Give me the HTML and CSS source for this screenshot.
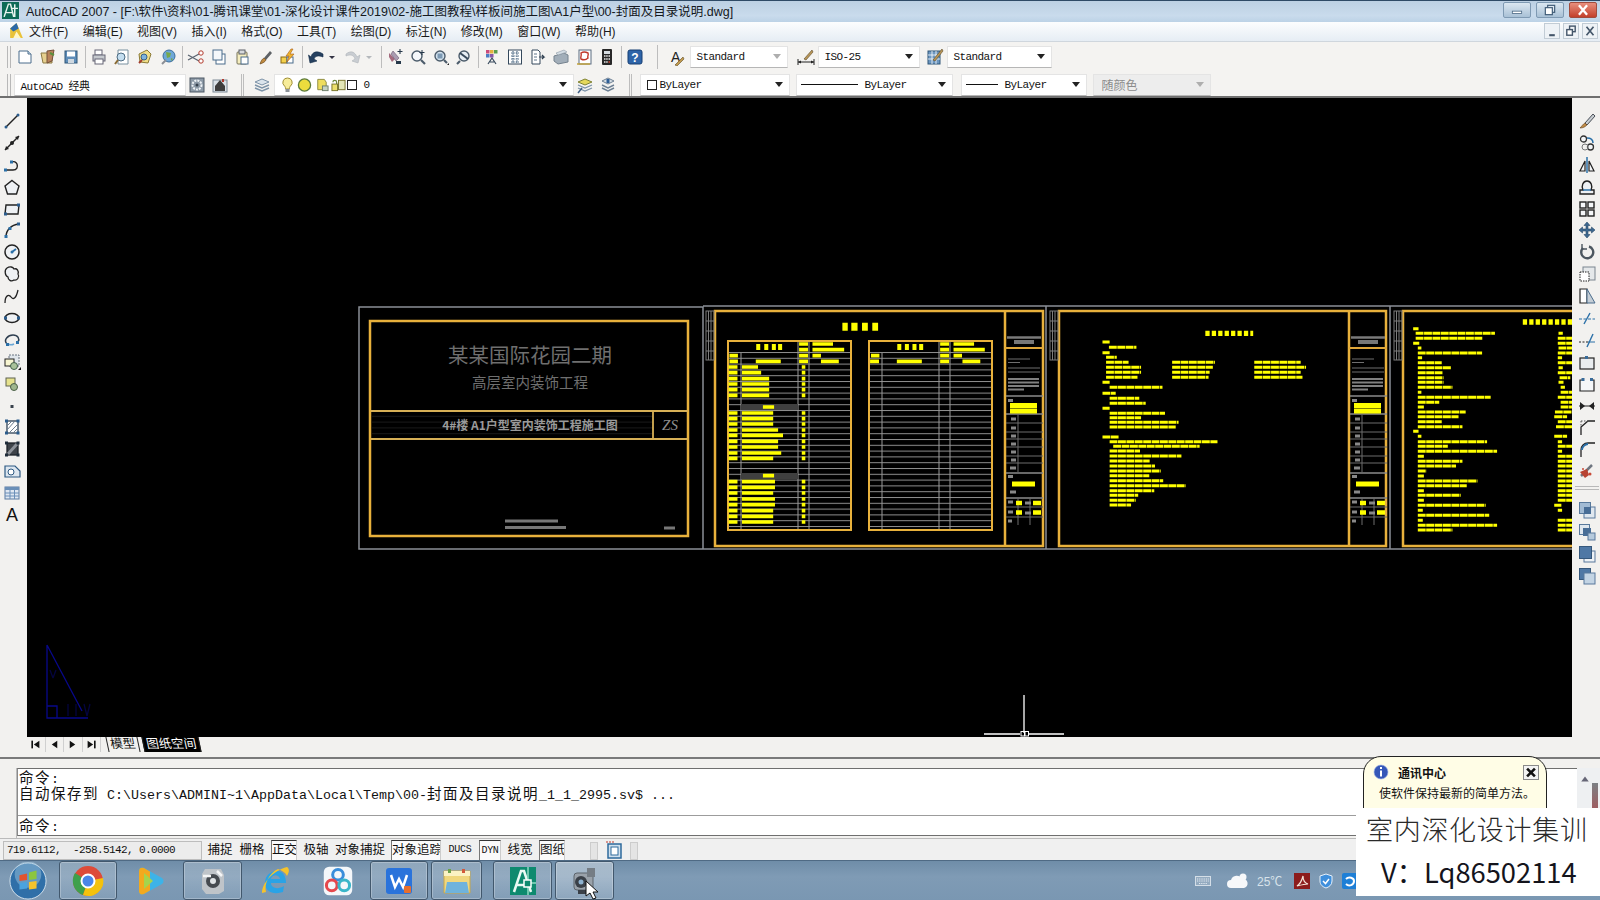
FILE: index.html
```html
<!DOCTYPE html>
<html lang="zh">
<head>
<meta charset="utf-8">
<title>AutoCAD 2007</title>
<link rel="stylesheet" href="styles.css">
</head>
<body>
<div class="app">
  <header class="titlebar">
    <svg class="applogo" viewBox="0 0 16 16"><rect width="16" height="16" fill="#0d6b57"/><path d="M2 14 6 2h2l3 12M4 10h6M12 2v12M9 6h6" stroke="#e8f5ef" stroke-width="1.4" fill="none"/></svg>
    <span class="titletext">AutoCAD 2007 - [F:\软件\资料\01-腾讯课堂\01-深化设计课件2019\02-施工图教程\样板间施工图\A1户型\00-封面及目录说明.dwg]</span>
    <div class="winbtns">
      <span class="winbtn"><svg viewBox="0 0 12 10"><rect x="2" y="6" width="8" height="2" fill="#fff" stroke="#4d6a86" stroke-width=".7"/></svg></span>
      <span class="winbtn"><svg viewBox="0 0 12 10"><rect x="4" y="1" width="6" height="6" fill="#dfe8f0" stroke="#3f5b76"/><rect x="2" y="3" width="6" height="6" fill="#fff" stroke="#3f5b76"/></svg></span>
      <span class="winbtn close"><svg viewBox="0 0 12 10"><path d="M2.5 1 9.5 9M9.5 1 2.5 9" stroke="#fff" stroke-width="2"/></svg></span>
    </div>
  </header>

  <nav class="menubar">
    <svg class="menulogo" viewBox="0 0 16 16"><path d="M2 15V6l6-5 6 14z" fill="#e9c23a"/><path d="M2 6l6-5 2 5-5 3z" fill="#2c6aa8"/><path d="M5 15l3-6 4 6z" fill="#fff6c8"/></svg>
    <span class="menuitem">文件(F)</span><span class="menuitem">编辑(E)</span><span class="menuitem">视图(V)</span><span class="menuitem">插入(I)</span><span class="menuitem">格式(O)</span><span class="menuitem">工具(T)</span><span class="menuitem">绘图(D)</span><span class="menuitem">标注(N)</span><span class="menuitem">修改(M)</span><span class="menuitem">窗口(W)</span><span class="menuitem">帮助(H)</span>
    <div class="docbtns">
      <span class="docbtn"><svg viewBox="0 0 10 10"><path d="M3 8h4" stroke="#44566a" stroke-width="1.5"/></svg></span>
      <span class="docbtn"><svg viewBox="0 0 10 10"><rect x="4" y="1.5" width="4" height="4" fill="none" stroke="#44566a"/><rect x="2" y="4" width="4" height="4" fill="#fff" stroke="#44566a"/></svg></span>
      <span class="docbtn"><svg viewBox="0 0 10 10"><path d="M2.5 2 7.5 8M7.5 2 2.5 8" stroke="#44566a" stroke-width="1.2"/></svg></span>
    </div>
  </nav>

  <div class="toolrow first">
    <span class="grip"></span>
    <span class="ic"><svg viewBox="0 0 18 18"><path d="M3 3h9l3 3v9H3z" fill="#fff" stroke="#4a6c8c"/><path d="M12 3v3h3" fill="#cfe0ee" stroke="#4a6c8c"/></svg></span>
    <span class="ic"><svg viewBox="0 0 18 18"><path d="M2 5h8l3 2v8H4z" fill="#e6cf8e" stroke="#8c7a45"/><path d="M8 3l7-1-2 11-5 2z" fill="#b9825a" stroke="#74503a"/><path d="M11 5l4 2" stroke="#5b8f3c" stroke-width="2"/></svg></span>
    <span class="ic"><svg viewBox="0 0 18 18"><rect x="3" y="3" width="12" height="12" fill="#5f8db8" stroke="#2f5679"/><rect x="5" y="3.5" width="8" height="5" fill="#fff"/><rect x="6" y="11" width="6" height="4" fill="#cfd8e0"/></svg></span>
    <span class="sep"></span>
    <span class="ic"><svg viewBox="0 0 18 18"><rect x="5" y="2" width="7" height="5" fill="#fff" stroke="#667"/><rect x="3" y="7" width="12" height="6" fill="#c5c9ce" stroke="#667"/><rect x="5" y="11" width="8" height="5" fill="#fff" stroke="#667"/></svg></span>
    <span class="ic"><svg viewBox="0 0 18 18"><path d="M5 2h10v14H5z" fill="#fff" stroke="#78909f"/><circle cx="8" cy="9" r="4" fill="#c4def0" stroke="#4c6b82"/><path d="M5 12 2 16" stroke="#8a6b34" stroke-width="2"/></svg></span>
    <span class="ic"><svg viewBox="0 0 18 18"><path d="M3 6l8-4 4 4-3 9-8-1z" fill="#f0dd86" stroke="#8b7a36"/><circle cx="8" cy="9" r="3" fill="#7eb2dc" stroke="#355f88"/><path d="M3 15l3-3" stroke="#a13b2d" stroke-width="2"/></svg></span>
    <span class="ic"><svg viewBox="0 0 18 18"><circle cx="10" cy="8" r="6" fill="#6ea8d8" stroke="#3d6e9c"/><path d="M7 4l5 1-1 4-3 1zM12 10l2 1-2 2z" fill="#77a84d"/><path d="M3 16l4-4" stroke="#8a8f96" stroke-width="2"/></svg></span>
    <span class="sep"></span>
    <span class="ic"><svg viewBox="0 0 18 18"><path d="M1 7l11 6M1 12l11-6" stroke="#5a6470" stroke-width="1.3"/><circle cx="14" cy="5" r="2.2" fill="#fff" stroke="#b2392b"/><circle cx="14" cy="13" r="2.2" fill="#fff" stroke="#b2392b"/></svg></span>
    <span class="ic"><svg viewBox="0 0 18 18"><rect x="6" y="6" width="9" height="10" fill="#fff" stroke="#4a6c8c"/><rect x="3" y="2" width="9" height="10" fill="#f4f7fa" stroke="#4a6c8c"/></svg></span>
    <span class="ic"><svg viewBox="0 0 18 18"><rect x="4" y="4" width="10" height="12" rx="1" fill="#f6eebf" stroke="#76725a"/><rect x="6" y="2" width="6" height="4" fill="#d7d9dc" stroke="#5a5f66"/><rect x="8" y="9" width="7" height="7" fill="#fff" stroke="#4a6c8c"/></svg></span>
    <span class="ic"><svg viewBox="0 0 18 18"><path d="M14 3 8 10l2 2 6-7z" fill="#5d6165"/><path d="M8 10c-2 1-3 3-4 6 3-1 5-2 6-4z" fill="#c08a3e" stroke="#5a3a12" stroke-width=".6"/></svg></span>
    <span class="ic"><svg viewBox="0 0 18 18"><rect x="2" y="9" width="6" height="6" fill="#f4d14c" stroke="#8c6a12"/><rect x="8" y="9" width="6" height="6" fill="#fff" stroke="#4a6c8c"/><path d="M12 1 7 8h3l-2 6 7-8h-4l3-5z" fill="#efb52f" stroke="#a75b18" stroke-width=".6"/></svg></span>
    <span class="sep"></span>
    <span class="ic"><svg viewBox="0 0 18 18"><path d="M16 6C10 2 5 4 4 9L1.500 7 3 15l7-2-3-2c1-3 4-4 9-2z" fill="#26405f" stroke="#102a47" stroke-width=".6"/></svg></span>
    <span class="arrowslot"><svg viewBox="0 0 8 8"><path d="M1 3h6L4 6z" fill="#334"/></svg></span>
    <span class="ic"><svg viewBox="0 0 18 18"><path d="M2 6c5-4 9-2 11 3l3-2-2 8-6-2 3-2C10 7 6 6 2 8z" fill="#c9cdd2" stroke="#aeb3b8" stroke-width=".6"/></svg></span>
    <span class="arrowslot"><svg viewBox="0 0 8 8"><path d="M1 3h6L4 6z" fill="#b4b8bc"/></svg></span>
    <span class="sep"></span>
    <span class="ic"><svg viewBox="0 0 18 18"><path d="M3 5l6 6-3 3-3-5z" fill="#a56b7e"/><path d="M7 3l6 7-3 3-5-7z" fill="#a99cb1" stroke="#6c5b70" stroke-width=".6"/><rect x="10" y="13" width="5" height="3" fill="#26384a"/><path d="M14 1v5M11.500 3.500h5" stroke="#26384a" stroke-width="1.100"/></svg></span>
    <span class="ic"><svg viewBox="0 0 18 18"><circle cx="8" cy="8" r="5" fill="#f5f8fb" stroke="#4c5c6b" stroke-width="1.400"/><path d="M12 12l4 4" stroke="#4c5c6b" stroke-width="2.200"/><path d="M13 2v5M10.500 4.500h5" stroke="#26384a"/></svg></span>
    <span class="ic"><svg viewBox="0 0 18 18"><circle cx="8" cy="8" r="5" fill="#d3e2ee" stroke="#4c5c6b" stroke-width="1.400"/><rect x="5.500" y="5.500" width="5" height="5" fill="#7c99b3"/><path d="M12 12l3 3" stroke="#4c5c6b" stroke-width="2.200"/><path d="M15 17h2v-2z" fill="#222"/></svg></span>
    <span class="ic"><svg viewBox="0 0 18 18"><circle cx="9" cy="8" r="5" fill="#e7eef4" stroke="#4c5c6b" stroke-width="1.400"/><path d="M5 5l8 6" stroke="#384a5c" stroke-width="2"/><path d="M5 13l-3 3" stroke="#4c5c6b" stroke-width="2.200"/></svg></span>
    <span class="sep"></span>
    <span class="ic"><svg viewBox="0 0 18 18"><rect x="3" y="2" width="3.500" height="3.500" fill="#c94a7b"/><rect x="7" y="2" width="3.500" height="3.500" fill="#e5b13f"/><rect x="11" y="2" width="3.500" height="3.500" fill="#5a9d4c"/><rect x="3" y="6" width="3.500" height="3.500" fill="#4a7cc4"/><rect x="7" y="6" width="3.500" height="3.500" fill="#8856a8"/><path d="M5 16l4-6 4 6M7 14h4" stroke="#36495c" stroke-width="1.200" fill="none"/></svg></span>
    <span class="ic"><svg viewBox="0 0 18 18"><rect x="2.500" y="2" width="13" height="14" fill="#fff" stroke="#35495c"/><path d="M5 5h8M5 8h8M5 11h8M5 14h8M7 3v12M11 3v12" stroke="#55708a" stroke-width="1.200" stroke-dasharray="1.500 .8"/></svg></span>
    <span class="ic"><svg viewBox="0 0 18 18"><path d="M3 2h6l2 2v12H3z" fill="#fff" stroke="#35495c"/><path d="M5 6h3M5 9h3M5 12h3" stroke="#5f7489"/><path d="M10 9h5l-2-2m2 2-2 2" stroke="#2e3f50" fill="none" stroke-width="1.200"/></svg></span>
    <span class="ic"><svg viewBox="0 0 18 18"><path d="M2 8l10-3 4 2v7l-10 2-4-3z" fill="#a2aeb9" stroke="#75828e"/><path d="M4 5l8-3 3 2-9 3z" fill="#d4dde4" stroke="#8f9ba6" stroke-width=".6"/></svg></span>
    <span class="ic"><svg viewBox="0 0 18 18"><rect x="4" y="2" width="12" height="14" fill="#fff" stroke="#5b6d80"/><path d="M6 5c3-2 5-1 7 0 1 2-1 3 0 5-2 2-5 2-7 1-1-2 1-3 0-6z" fill="none" stroke="#c0392b" stroke-width="1.400"/><path d="M2 16h13" stroke="#c2a23d" stroke-width="1.500"/></svg></span>
    <span class="ic"><svg viewBox="0 0 18 18"><rect x="4" y="1" width="10" height="16" rx="1" fill="#282828"/><rect x="6" y="3" width="6" height="3" fill="#d7dde2"/><path d="M6 8h1.500M8.200 8h1.500M10.500 8H12M6 11h1.500M8.200 11h1.500M10.500 11H12M6 14h1.500M8.200 14h1.500" stroke="#e9e9e9" stroke-width="1.500"/><path d="M10.500 14H12" stroke="#d34836" stroke-width="1.500"/></svg></span>
    <span class="sep"></span>
    <span class="ic"><svg viewBox="0 0 18 18"><rect x="2" y="2" width="14" height="14" rx="2" fill="#2e64a8" stroke="#163e73"/><text x="9" y="14" class="helpq">?</text></svg></span>
    <span class="endsep"></span>
    <span class="ic"><svg viewBox="0 0 18 18"><text x="2" y="14" class="glyph-a">A</text><path d="M6 17l8-8 1 2-7 7z" fill="#c29a4e" stroke="#5c4a22" stroke-width=".6"/></svg></span>
    <span class="combo w98 disabledarrow"><span class="mono">Standard</span><span class="caret"></span></span>
    <span class="ic"><svg viewBox="0 0 18 18"><path d="M1 14h16" stroke="#222"/><path d="M1 11v6M17 11v6" stroke="#222"/><path d="M1 14l3-1.500v3zM17 14l-3-1.500v3z" fill="#222"/><path d="M15 2 7 11l2 1 7-8z" fill="#b99657" stroke="#5a4826" stroke-width=".6"/></svg></span>
    <span class="combo w102"><span class="mono">ISO-25</span><span class="caret"></span></span>
    <span class="ic"><svg viewBox="0 0 18 18"><rect x="2" y="3" width="12" height="13" fill="#6d97c1" stroke="#2f5679"/><path d="M2 7h12M2 11h12M6 3v13M10 3v13" stroke="#fff" stroke-width=".8"/><path d="M16 1 7 12l2 1 8-10z" fill="#b99657" stroke="#5a4826" stroke-width=".6"/></svg></span>
    <span class="combo w105"><span class="mono">Standard</span><span class="caret"></span></span>
  </div>

  <div class="toolrow second">
    <span class="grip"></span>
    <span class="combo w172"><span class="mono">AutoCAD 经典</span><span class="caret"></span></span>
    <span class="ic"><svg viewBox="0 0 18 18"><rect x="2" y="2" width="14" height="14" fill="#8c99a6" stroke="#4c5964"/><circle cx="9" cy="9" r="4.500" fill="none" stroke="#eef2f5" stroke-width="2" stroke-dasharray="2 1"/><circle cx="9" cy="9" r="1.500" fill="#36424e"/></svg></span>
    <span class="ic"><svg viewBox="0 0 18 18"><rect x="2" y="4" width="14" height="12" fill="#dbe2e8" stroke="#7d8a96"/><path d="M4 10l5-6 5 6v5H4z" fill="#3d3d3d"/><path d="M12 3v3" stroke="#b03a2e" stroke-width="2"/></svg></span>
    <span class="gapsep"></span>
    <span class="ic"><svg viewBox="0 0 18 18"><path d="M9 3l7 3-7 3-7-3z" fill="#dbe4ec" stroke="#7d93a8"/><path d="M2 9l7 3 7-3M2 12l7 3 7-3" fill="none" stroke="#7d93a8" stroke-width="1.400"/></svg></span>
    <span class="combo w300 layer">
      <span class="lic"><svg viewBox="0 0 14 16"><path d="M7 1a4.500 4.500 0 0 0-3 8c1 1 1 2 1 3h4c0-1 0-2 1-3a4.500 4.500 0 0 0-3-8z" fill="#f7ec9a" stroke="#a08f36"/><rect x="5" y="12" width="4" height="3" fill="#8c9299"/></svg></span>
      <span class="lic"><svg viewBox="0 0 16 16"><circle cx="8" cy="8" r="6.500" fill="#ecdc3d" stroke="#5c7b3a" stroke-width="1.400"/></svg></span>
      <span class="lic"><svg viewBox="0 0 16 16"><path d="M4 2h7l2 3v8H4z" fill="#eedd5e" stroke="#8b8a3e"/><rect x="9" y="9" width="6" height="5" fill="#c4d2c2" stroke="#6c7d6b"/></svg></span>
      <span class="lic"><svg viewBox="0 0 16 16"><path d="M2 5a2 2 0 0 1 4 0v2" fill="none" stroke="#6f8a3e" stroke-width="1.300"/><rect x="1" y="7" width="6" height="7" fill="#ecdf6b" stroke="#77732a"/><rect x="8" y="3" width="7" height="10" fill="#e4e7b8" stroke="#77732a"/></svg></span>
      <span class="swatch"></span>
      <span class="layerzero mono">0</span>
      <span class="caret"></span>
    </span>
    <span class="ic"><svg viewBox="0 0 18 18"><path d="M9 3l7 3-7 3-7-3z" fill="#e5d85b" stroke="#7f8232"/><path d="M2 9l7 3 7-3M2 12l7 3 7-3" fill="none" stroke="#7d93a8" stroke-width="1.300"/><path d="M2 17l4-5" stroke="#3d5e86" stroke-width="1.500"/></svg></span>
    <span class="ic"><svg viewBox="0 0 18 18"><path d="M9 2l6 3-6 3-6-3z" fill="#d5dde4" stroke="#6e8194"/><path d="M3 9l6 3 6-3M3 12l6 3 6-3" fill="none" stroke="#6e8194" stroke-width="1.400"/><path d="M9 3v4" stroke="#2f5f96" stroke-width="3"/></svg></span>
    <span class="gapsep small"></span>
    <span class="combo w150"><span class="swatch"></span><span class="mono bylayer">ByLayer</span><span class="caret"></span></span>
    <span class="combo w157 spaced"><span class="linesample long"></span><span class="mono bylayer">ByLayer</span><span class="caret"></span></span>
    <span class="combo w126 spaced"><span class="linesample"></span><span class="mono bylayer">ByLayer</span><span class="caret"></span></span>
    <span class="combo w118 disabled"><span class="greytext">随颜色</span><span class="caret"></span></span>
  </div>

  <main class="workspace">
    <aside class="sidetb left">
      <span class="ti"><svg viewBox="0 0 18 18"><path d="M3 15 15 3" stroke="#222" stroke-width="1.500"/><circle cx="3" cy="15" r="1.500" fill="#2b5c8c"/><circle cx="15" cy="3" r="1.500" fill="#2b5c8c"/></svg></span>
      <span class="ti"><svg viewBox="0 0 18 18"><path d="M2 16 16 2" stroke="#222" stroke-width="1.500"/><circle cx="9" cy="9" r="2" fill="#222"/><path d="M2 16l4-1-3-3zM16 2l-4 1 3 3z" fill="#222"/></svg></span>
      <span class="ti"><svg viewBox="0 0 18 18"><path d="M2 14h8c4 0 5-3 4-6-1-2-3-3-5-2" fill="none" stroke="#222" stroke-width="1.400"/><rect x="1" y="12.500" width="3" height="3" fill="#2b70a8"/><rect x="7" y="4.500" width="3" height="3" fill="#2b70a8"/></svg></span>
      <span class="ti"><svg viewBox="0 0 18 18"><path d="M9 2.500 16 8l-2.500 8h-9L2 8z" fill="#eef1f4" stroke="#222" stroke-width="1.400"/></svg></span>
      <span class="ti"><svg viewBox="0 0 18 18"><path d="M3 5h13l-1 9H2z" fill="#eef1f4" stroke="#222" stroke-width="1.400"/><rect x="1" y="12.500" width="3" height="3" fill="#2b5c8c"/><rect x="14" y="3.500" width="3" height="3" fill="#2b5c8c"/></svg></span>
      <span class="ti"><svg viewBox="0 0 18 18"><path d="M3 16C3 9 8 4 16 3" fill="none" stroke="#222" stroke-width="1.500"/><rect x="1.500" y="14" width="3" height="3" fill="#2b70a8"/><rect x="14" y="1.500" width="3" height="3" fill="#2b5c8c"/><rect x="5.500" y="6" width="3" height="3" fill="#2b70a8"/></svg></span>
      <span class="ti"><svg viewBox="0 0 18 18"><circle cx="9" cy="9" r="7" fill="#eef1f4" stroke="#222" stroke-width="1.500"/><path d="M9 9l4-3" stroke="#2b70a8" stroke-width="1.800"/><circle cx="9" cy="9" r="1.500" fill="#2b70a8"/></svg></span>
      <span class="ti"><svg viewBox="0 0 18 18"><path d="M4 3c3-2 6-1 7 1 3-1 5 2 4 5 2 3-1 7-4 6-3 2-6 0-6-3C2 11 1 5 4 3z" fill="#eef1f4" stroke="#222" stroke-width="1.300"/></svg></span>
      <span class="ti"><svg viewBox="0 0 18 18"><path d="M2 16C2 8 6 7 8 10s5 2 7-7" fill="none" stroke="#222" stroke-width="1.300"/></svg></span>
      <span class="ti"><svg viewBox="0 0 18 18"><ellipse cx="9" cy="9" rx="7" ry="4.500" fill="#eef1f4" stroke="#222" stroke-width="1.600"/><rect x="1" y="7.500" width="3" height="3" fill="#2b5c8c"/><rect x="14" y="7.500" width="3" height="3" fill="#2b5c8c"/></svg></span>
      <span class="ti"><svg viewBox="0 0 18 18"><path d="M4 13C0 9 5 4 10 4s7 4 5 7" fill="none" stroke="#2f3f50" stroke-width="1.500"/><path d="M5 13c2 1 4 1 6 0" fill="none" stroke="#69a7d6" stroke-width="1.500"/><rect x="3" y="12" width="3" height="3" fill="#2b70a8"/><rect x="13" y="10" width="3" height="3" fill="#2b70a8"/></svg></span>
      <span class="ti"><svg viewBox="0 0 18 18"><rect x="6" y="2" width="10" height="11" fill="#dfe5ea" stroke="#68737e" stroke-dasharray="2 1"/><rect x="2" y="6" width="9" height="7" fill="#f8f6d2" stroke="#222"/><circle cx="11" cy="13" r="3.500" fill="#a9c29a" stroke="#44624c"/><path d="M15 17h3v-3z" fill="#111"/></svg></span>
      <span class="ti"><svg viewBox="0 0 18 18"><rect x="3" y="3" width="9" height="8" fill="#e6e28d" stroke="#5e6350"/><circle cx="11" cy="12" r="3.500" fill="#9fb68d" stroke="#4a5f46"/></svg></span>
      <span class="ti"><svg viewBox="0 0 18 18"><rect x="7.500" y="8" width="3" height="3" fill="#39424c"/></svg></span>
      <span class="ti"><svg viewBox="0 0 18 18"><rect x="4" y="3" width="11" height="12" fill="#fff" stroke="#2e4256" stroke-width="1.300"/><path d="M4 8l5-5M4 12l8-9M6 15l9-9M10 15l5-5" stroke="#6f7f90"/><rect x="2" y="1.500" width="3" height="3" fill="#2b5c8c"/><rect x="13.500" y="1.500" width="3" height="3" fill="#2b5c8c"/><rect x="2" y="13.500" width="3" height="3" fill="#2b5c8c"/><rect x="13.500" y="13.500" width="3" height="3" fill="#2b5c8c"/></svg></span>
      <span class="ti"><svg viewBox="0 0 18 18"><rect x="4" y="3" width="11" height="12" fill="#3e4349" stroke="#1d2228" stroke-width="1.300"/><path d="M5 14 14 4" stroke="#8c9198" stroke-width="3"/><rect x="2" y="1.500" width="3" height="3" fill="#1f2d3a"/><rect x="13.500" y="1.500" width="3" height="3" fill="#1f2d3a"/><rect x="2" y="13.500" width="3" height="3" fill="#1f2d3a"/><rect x="13.500" y="13.500" width="3" height="3" fill="#1f2d3a"/></svg></span>
      <span class="ti"><svg viewBox="0 0 18 18"><path d="M2 4h10l5 5v6H2z" fill="#dde6ef" stroke="#2e5a83" stroke-width="1.200"/><circle cx="8" cy="10" r="3" fill="#fff" stroke="#2e5a83"/></svg></span>
      <span class="ti"><svg viewBox="0 0 18 18"><rect x="2" y="3" width="14" height="12" fill="#dfe7f2" stroke="#5a7ba1"/><rect x="2" y="3" width="14" height="3" fill="#6a8fb8"/><path d="M2 9h14M2 12h14M7 6v9M11.500 6v9" stroke="#6a8fb8"/></svg></span>
      <span class="ti letter">A</span>
    </aside>

    <div class="canvas">
      <svg class="drawing" viewBox="27 98 1545 639">
        <defs>
          <pattern id="rows" width="20" height="5.8" patternUnits="userSpaceOnUse" y="352"><rect width="20" height="1" fill="#8e8e8e"/></pattern>
          <g id="stripes" stroke="#7d7d7d" fill="none">
            <rect x="706" y="311" width="8" height="49"/>
            <path d="M708.500 311v49M711 311v49M706 321h8M706 331h8M706 341h8M706 351h8"/>
          </g>
          <g id="titleblock">
            <path d="M1005 348h38" stroke="#e0a73a" stroke-width="2"/>
            <path d="M1007 337.500h34" stroke="#7a7a7a" stroke-width="2.500"/>
            <path d="M1014 342h20" stroke="#777" stroke-width="4"/>
            <path d="M1008 359h22M1008 362.500h12M1008 368h32M1008 372h32" stroke="#6f6f6f"/>
            <path d="M1008 379h31M1008 382.500h31M1008 386h31M1008 389.500h16" stroke="#808080" stroke-width="1.800"/>
            <path d="M1006 396h37M1006 414h37M1006 473h37M1006 498h37" stroke="#8a8a8a" stroke-width="1.500"/>
            <path d="M1018 414v58M1018 498v27M1030 498v27M1006 423h37M1006 432h37M1006 439h37M1006 447h37M1006 456h37M1006 463h37M1006 507h37M1006 517h37" stroke="#6d6d6d"/>
            <path d="M1008 400.500h5M1011 419h5M1011 428h5M1011 436h5M1011 444h5M1011 452h5M1011 460h5M1010 468h6M1008 476.500h5M1010 492h6M1008 502h5M1008 512h5M1008 521h4M1025 503h6M1025 513h6" stroke="#888" stroke-width="3"/>
            <path d="M1010 405.500h27M1010 411h27M1012 484h23" stroke="#ffff00" stroke-width="5"/>
            <path d="M1016 503h6M1033 503h8M1016 512.500h6M1033 512.500h8" stroke="#ffff00" stroke-width="4.500"/>
          </g>
        </defs>

        <!-- sheet borders -->
        <path d="M359 307H703V549H359zM703 306H1572M703 549H1572M1046 306V549M1390 306V549" fill="none" stroke="#8a8f96" stroke-width="1.500"/>
        <g fill="none" stroke="#e8b13c" stroke-width="2.500">
          <rect x="370" y="321" width="318" height="215"/>
          <rect x="715" y="311" width="328" height="235"/>
          <rect x="1059" y="311" width="327" height="235"/>
          <rect x="1403" y="311" width="200" height="235"/>
          <path d="M1005 311V546M1349 311V546"/>
        </g>

        <!-- cover sheet -->
        <path d="M371 411H688M371 439H688M653 411V439" stroke="#d7b056" stroke-width="1.800"/>
        <rect x="372" y="413" width="280" height="25" fill="url(#rows)" opacity=".18"/>
        <text x="530" y="363" class="cad-title">某某国际花园二期</text>
        <text x="530" y="387.500" class="cad-sub">高层室内装饰工程</text>
        <text x="530" y="430" class="cad-band">4#楼 A1户型室内装饰工程施工图</text>
        <text x="670" y="430" class="cad-zs">ZS</text>
        <path d="M505 521h53M505 527.500h61M664 528h11" stroke="#777" stroke-width="3"/>

        <!-- index sheet -->
        <use href="#stripes"/>
        <use href="#stripes" x="344"/>
        <use href="#stripes" x="688"/>
        <use href="#titleblock"/>
        <use href="#titleblock" x="344"/>

        <rect x="729" y="352" width="122" height="178" fill="url(#rows)"/>
        <rect x="870" y="352" width="122" height="178" fill="url(#rows)"/>
        <path d="M741 353V530M798 341V530M809 341V530M882 353V530M939 341V530M950 341V530" stroke="#9a9a9a"/>
        <rect x="741" y="404" width="57" height="6" fill="#3f3f3f"/>
        <rect x="741" y="473" width="57" height="6" fill="#3f3f3f"/>
        <rect x="728" y="341" width="123" height="189" fill="none" stroke="#e8b13c" stroke-width="2"/>
        <rect x="869" y="341" width="123" height="189" fill="none" stroke="#e8b13c" stroke-width="2"/>

        <g transform="translate(350 300) scale(.4464 .3333)" fill="none" stroke="#ffff00">
          <path stroke-width="24" d="M1103 80h12M1123 80h14M1147 80h13M1170 80h13"/>
          <path stroke-width="18" d="M910 141h9M928 141h9M945 141h9M959 141h9M1226 141h9M1243 141h9M1260 141h9M1275 141h9"/>
          <path stroke-width="11" d="M1006 132h20M1036 132h46M1006 149h20M1036 149h71M1006 167h20M1036 167h19M850 167h19M850 184h19M909 184h56M1006 184h20M1055 184h40M1322 132h20M1352 132h46M1322 149h20M1352 149h70M1322 167h20M1352 167h19M1167 167h19M1165 184h20M1225 184h56M1322 184h20M1372 184h40"/>
          <path stroke-width="11" d="M848 201h20M878 201h36M1012 201h8M848 218h20M878 218h43M1012 218h8M848 236h20M878 236h61M1012 236h8M848 252h20M878 252h61M1012 252h8M848 269h20M878 269h61M1012 269h8M848 286h20M878 286h61M1012 286h8M925 321h25M848 339h20M878 339h70M1012 339h8M848 356h20M878 356h70M1012 356h8M848 372h20M878 372h70M1012 372h8M848 390h20M878 390h81M1012 390h8M848 406h20M878 406h92M1012 406h8M848 424h20M878 424h81M1012 424h8M848 441h20M878 441h81M1012 441h8M848 459h20M878 459h88M1012 459h8M848 475h20M878 475h70M1012 475h8M925 527h25M848 545h20M878 545h74M1012 545h8M848 562h20M878 562h74M1012 562h8M848 579h20M878 579h70M1012 579h8M848 597h20M878 597h74M1012 597h8M848 614h20M878 614h74M1012 614h8M848 632h20M878 632h70M1012 632h8M848 649h20M878 649h70M1012 649h8M848 666h20M878 666h70M1012 666h8"/>
        </g>

        <!-- notes sheets -->
        <g transform="translate(1040 300) scale(.3571 .3333)" fill="none" stroke="#ffff00" stroke-width="9" stroke-dasharray="22 1.500">
          <path stroke-width="16" stroke-dasharray="12 6" d="M463 100h134M1352 66h140"/>
          <path d="M175 126h20M193 142h77M175 158h20M185 172h30M185 187h63M370 187h120M600 187h130M185 202h98M370 202h114M600 202h145M185 217h98M370 217h105M600 217h130M185 232h88M370 232h102M600 232h135M175 247h20M195 262h148M175 280h37M195 295h83M195 310h101M175 325h20M195 340h155M195 353h88M195 367h193M195 381h185M175 411h45M195 425h302M205 439h242M195 453h85M195 468h201M195 483h112M195 498h127M195 513h143M195 527h111M195 542h150M195 557h213M195 572h125M195 586h80M195 601h73M195 615h60"/>
          <path d="M1045 86h15M1052 100h222M1052 115h188M1045 130h17M1058 144h10M1058 159h180M1058 173h12M1058 188h67M1058 203h94M1058 218h70M1058 233h72M1058 247h72M1058 262h97M1058 277h10M1058 292h204M1058 307h60M1058 321h17M1058 336h134M1058 350h114M1058 365h67M1058 380h125M1045 394h15M1058 409h10M1058 425h194M1058 439h84M1058 454h222M1058 469h17M1058 484h125M1058 498h107M1058 513h24M1058 528h17M1058 543h167M1058 557h137M1058 572h17M1058 586h120M1058 601h17M1058 616h190M1058 631h14M1058 646h200M1058 661h14M1058 676h222M1058 690h97"/>
          <path d="M1452 100h12M1450 115h50M1450 130h50M1452 144h40M1450 159h50M1450 173h12M1450 188h50M1452 203h12M1450 218h50M1455 233h30M1452 247h14M1458 262h12M1458 277h40M1450 292h50M1458 307h40M1458 321h40M1442 336h50M1440 350h36M1450 365h50M1445 380h50M1440 409h36M1450 425h12M1450 439h50M1450 454h12M1450 469h50M1450 484h50M1450 498h50M1450 513h50M1450 528h50M1450 543h50M1450 557h50M1450 572h50M1450 586h50M1450 601h50M1440 616h20M1450 631h12M1450 661h50M1450 676h50M1450 690h50"/>
        </g>

        <!-- UCS icon -->
        <g stroke="#08088a" stroke-width="1.300" fill="none">
          <path d="M47 645V718H88M47 645 82 711M47 706H57V718"/>
          <path d="M50 670l3 8M56 670l-3 8M68 704v12M76 704v12M84 704l3 12 3-12" stroke-opacity=".45"/>
        </g>

        <!-- crosshair -->
        <path d="M1024 695V733M984 734H1020M1029 734H1064" stroke="#fff" stroke-width="1.300"/>
        <rect x="1021" y="731.500" width="3.500" height="4.500" fill="none" stroke="#fff"/>
        <rect x="1025" y="731.500" width="3.500" height="4.500" fill="none" stroke="#fff"/>
      </svg>
    </div>

    <aside class="sidetb right">
      <span class="ti"><svg viewBox="0 0 18 18"><path d="M15 2 7 11l2 2 8-9z" fill="#c8cdd2" stroke="#4a5058"/><path d="M7 11c-2 1-3 3-5 5 3 0 5-1 7-3z" fill="#bf8a46" stroke="#5c3b16" stroke-width=".6"/></svg></span>
      <span class="ti"><svg viewBox="0 0 18 18"><circle cx="5.500" cy="5" r="3" fill="#f3f5f7" stroke="#333" stroke-width="1.300"/><circle cx="12.500" cy="13" r="3" fill="#f3f5f7" stroke="#333" stroke-width="1.300"/><circle cx="7" cy="13" r="3" fill="none" stroke="#777"/><path d="M9 4c4 0 6 2 6 5" fill="none" stroke="#2b70a8" stroke-width="1.500"/></svg></span>
      <span class="ti"><svg viewBox="0 0 18 18"><path d="M9 1v16" stroke="#2b70a8" stroke-width="1.500"/><path d="M7 5v10H2zM11 5v10h5z" fill="#f4f6f8" stroke="#222" stroke-width="1.200"/></svg></span>
      <span class="ti"><svg viewBox="0 0 18 18"><path d="M2 16h14v-4h-3c2-4 0-9-4-9S3 8 5 12H2z" fill="#eef1f4" stroke="#222" stroke-width="1.400"/><path d="M5 12h8" stroke="#2b70a8" stroke-width="1.500"/></svg></span>
      <span class="ti"><svg viewBox="0 0 18 18"><g fill="#f5f7f9" stroke="#222" stroke-width="1.400"><rect x="2" y="2" width="6" height="6"/><rect x="10" y="2" width="6" height="6"/><rect x="2" y="10" width="6" height="6"/><rect x="10" y="10" width="6" height="6"/></g></svg></span>
      <span class="ti"><svg viewBox="0 0 18 18"><path d="M9 1 6 4.500h2V8H4.500V6L1 9l3.500 3v-2H8v3.500H6L9 17l3-3.500h-2V10h3.500v2L17 9l-3.500-3v2H10V4.500h2z" fill="#3d6890" stroke="#28496a" stroke-width=".6"/></svg></span>
      <span class="ti"><svg viewBox="0 0 18 18"><path d="M5 5a6 6 0 1 0 6-1.500" fill="none" stroke="#4d5760" stroke-width="2.400"/><path d="M4 1v5h5" fill="none" stroke="#4d5760" stroke-width="1.400"/></svg></span>
      <span class="ti"><svg viewBox="0 0 18 18"><rect x="5" y="2" width="12" height="13" fill="#e5e8ea" stroke="#7a858f"/><rect x="2" y="7" width="9" height="9" fill="#fff" stroke="#222" stroke-dasharray="1.500 1"/></svg></span>
      <span class="ti"><svg viewBox="0 0 18 18"><path d="M2 2h7v14H2z" fill="#fff" stroke="#222" stroke-width="1.200"/><path d="M9 2l8 14H9z" fill="#c5ced6" stroke="#4a6c8c"/></svg></span>
      <span class="ti"><svg viewBox="0 0 18 18"><path d="M1 10h16" stroke="#2b70a8" stroke-dasharray="3 1.500"/><path d="M12 4 6 15" stroke="#2b70a8" stroke-width="1.400"/></svg></span>
      <span class="ti"><svg viewBox="0 0 18 18"><path d="M1 11h9" stroke="#222" stroke-dasharray="2 1.500"/><path d="M10 11h7" stroke="#2b70a8"/><path d="M15 3 9 16" stroke="#2b70a8" stroke-width="1.400"/></svg></span>
      <span class="ti"><svg viewBox="0 0 18 18"><rect x="2" y="5" width="14" height="11" fill="#e9ecef" stroke="#222" stroke-width="1.200"/><rect x="7" y="3" width="3" height="3" fill="#3a6c9a"/></svg></span>
      <span class="ti"><svg viewBox="0 0 18 18"><path d="M5 5H2v11h14V5h-3" fill="#f5f7f9" stroke="#222" stroke-width="1.200"/><rect x="3.500" y="3" width="3" height="3" fill="#3a6c9a"/><rect x="12" y="3" width="3" height="3" fill="#3a6c9a"/></svg></span>
      <span class="ti"><svg viewBox="0 0 18 18"><path d="M1 9h16" stroke="#222"/><path d="M2 5v8l5-4zM16 5v8l-5-4z" fill="#222"/></svg></span>
      <span class="ti"><svg viewBox="0 0 18 18"><path d="M3 17V9L10 3h7" fill="none" stroke="#222" stroke-width="1.300"/><path d="M3 3h7M3 3v6" stroke="#555" stroke-dasharray="1.500 1.500"/></svg></span>
      <span class="ti"><svg viewBox="0 0 18 18"><path d="M3 17V10c0-4 3-7 7-7h7" fill="none" stroke="#222" stroke-width="1.300"/><path d="M4 10c0-3 3-6 6-6" fill="none" stroke="#2b70a8" stroke-width="1.800"/></svg></span>
      <span class="ti"><svg viewBox="0 0 18 18"><path d="M3 14 14 3" stroke="#6f7680" stroke-width="2.500"/><path d="M2 10l5 6 4-3-2-6z" fill="#b84433"/><circle cx="12" cy="12" r="1.500" fill="#c94a38"/><circle cx="5" cy="7" r="1" fill="#c94a38"/></svg></span>
      <span class="griph"></span>
      <span class="ti"><svg viewBox="0 0 18 18"><rect x="6" y="6" width="11" height="11" fill="#dfe7ef" stroke="#58799c"/><rect x="1.500" y="1.500" width="11" height="11" fill="#a2bbd4" stroke="#58799c"/><rect x="6" y="6" width="7" height="7" fill="#486d96"/></svg></span>
      <span class="ti"><svg viewBox="0 0 18 18"><rect x="1.500" y="1.500" width="10" height="10" fill="#dfe7ef" stroke="#58799c"/><rect x="5" y="5" width="8" height="8" fill="#486d96"/><rect x="10" y="10" width="7" height="7" fill="#b6cadd" stroke="#58799c"/></svg></span>
      <span class="ti"><svg viewBox="0 0 18 18"><rect x="6" y="6" width="11" height="11" fill="#eef2f6" stroke="#58799c"/><rect x="1.500" y="1.500" width="12" height="12" fill="#4f78a5" stroke="#36587c"/></svg></span>
      <span class="ti"><svg viewBox="0 0 18 18"><rect x="1.500" y="1.500" width="11" height="11" fill="#4f78a5" stroke="#36587c"/><rect x="6" y="6" width="11" height="11" fill="#c3d4e4" stroke="#58799c"/></svg></span>
    </aside>
  </main>

  <div class="tabsrow">
    <span class="navbtn"><svg viewBox="0 0 10 10"><path d="M2 1.500v7" stroke="#111" stroke-width="1.500"/><path d="M8.500 1.500v7L3.500 5z" fill="#111"/></svg></span>
    <span class="navbtn"><svg viewBox="0 0 10 10"><path d="M7.500 1.500v7L2.500 5z" fill="#111"/></svg></span>
    <span class="navbtn"><svg viewBox="0 0 10 10"><path d="M2.500 1.500v7L7.500 5z" fill="#111"/></svg></span>
    <span class="navbtn"><svg viewBox="0 0 10 10"><path d="M8 1.500v7" stroke="#111" stroke-width="1.500"/><path d="M1.500 1.500v7L6.500 5z" fill="#111"/></svg></span>
    <span class="tab">模型</span>
    <span class="tab active">图纸空间</span>
  </div>

  <section class="command">
    <span class="cmdgrip"></span>
    <div class="cmdbox">
      <div class="cmdoutput">
        <p class="cmdline"><span class="cjk">命令</span>:</p>
        <p class="cmdline"><span class="cjk">自动保存到</span> C:\Users\ADMINI~1\AppData\Local\Temp\00-<span class="cjk">封面及目录说明</span>_1_1_2995.sv$ ...</p>
      </div>
      <p class="cmdline cmdinput"><span class="cjk">命令</span>:</p>
    </div>
    <div class="cmdscroll">
      <svg viewBox="0 0 8 6"><path d="M1 5 4 1l3 4z" fill="#667"/></svg>
      <span class="cmdthumb"></span>
    </div>
  </section>

  <footer class="status">
    <span class="coords">719.6112,  -258.5142, 0.0000</span>
    <span class="sbtn">捕捉</span><span class="sbtn">栅格</span><span class="sbtn on">正交</span><span class="sbtn">极轴</span><span class="sbtn wide">对象捕捉</span><span class="sbtn wide on">对象追踪</span><span class="sbtn mono">DUCS</span><span class="sbtn narrow on mono">DYN</span><span class="sbtn">线宽</span><span class="sbtn on">图纸</span>
    <span class="sarrow first"></span>
    <svg class="sicon" viewBox="0 0 18 20"><rect x="3" y="4" width="13" height="14" fill="#cfe0ee" stroke="#2e6a9c" stroke-width="1.500"/><rect x="6" y="7" width="7" height="8" fill="#fff" stroke="#2e6a9c"/><path d="M1 2h8" stroke="#c0392b" stroke-dasharray="2 1"/></svg>
    <span class="sarrow"></span>
  </footer>

  <div class="taskbar">
    <span class="orb">
      <svg viewBox="0 0 40 40"><circle cx="20" cy="20" r="19" fill="#2f6fa8" stroke="#d6e4ee" stroke-width="1"/><circle cx="20" cy="13" r="14" fill="#a8cbe2" opacity=".45"/><path d="M11 14l8-2v7l-8 1z" fill="#e2532e"/><path d="M21 11l8-2v9l-8 1z" fill="#8cc63f"/><path d="M11 22l8-1v7l-8 1z" fill="#4aa3df"/><path d="M21 21l8-1v8l-8 1z" fill="#f5c32c"/></svg>
    </span>
    <span class="task w58 framed"><svg viewBox="0 0 32 32"><circle cx="16" cy="16" r="15" fill="#dd4b39"/><path d="M16 16 3 8a15 15 0 0 0 8 22z" fill="#3ea04c"/><path d="M16 16l-5 14A15 15 0 0 0 31 13z" fill="#f4c20d"/><circle cx="16" cy="16" r="6.500" fill="#4a86e8" stroke="#fff" stroke-width="2"/></svg></span>
    <span class="task w60"><svg viewBox="0 0 32 32"><path d="M5 6c0-3 2-4 5-3l18 10c2 1.500 2 4.500 0 6L10 29c-3 1-5 0-5-3z" fill="#3db3e8"/><path d="M5 6c0-3 2-4 5-3l6 3.500v19L10 29c-3 1-5 0-5-3z" fill="#f2a91e"/><path d="M10 8l9 8-9 8z" fill="#a5d44c"/></svg></span>
    <span class="task w59 framed"><svg viewBox="0 0 32 32"><path d="M8 4h16l3 6v16l-5 3H9l-4-5V9z" fill="#bfc4c9"/><circle cx="16" cy="16" r="7" fill="#454a50"/><circle cx="16" cy="16" r="3" fill="#dfe3e6"/><path d="M6 11h8M20 6l5 5" stroke="#f4f5f6" stroke-width="2.500"/></svg></span>
    <span class="task w60"><svg viewBox="0 0 32 32"><path d="M6 18c0-8 6-12 12-12s9 5 9 12H12c0 5 7 7 13 3l-1 6c-9 3-18 0-18-9zm6-4h9c-1-5-8-5-9 0z" fill="#2aa3e6"/><path d="M3 28C3 18 14 6 28 2c3 2 2 6 0 9-2-4-6-6-9-7C10 8 5 19 7 27z" fill="#f5c32c"/></svg></span>
    <span class="task w59"><svg viewBox="0 0 36 36"><rect x="2" y="2" width="32" height="32" rx="6" fill="#f4f7fa"/><circle cx="18" cy="11" r="6" fill="none" stroke="#3a8edb" stroke-width="3.400"/><circle cx="11" cy="23" r="6" fill="none" stroke="#e5484d" stroke-width="3.400"/><circle cx="25" cy="23" r="6" fill="none" stroke="#3ab6c9" stroke-width="3.400"/></svg></span>
    <span class="task w58 framed"><svg viewBox="0 0 32 32"><rect x="3" y="3" width="26" height="26" rx="3" fill="#2a73db"/><path d="M8 10l4 12 4-8 4 8 4-12" fill="none" stroke="#fff" stroke-width="2.500"/><rect x="21" y="21" width="7" height="7" rx="1" fill="#e66f2e"/></svg></span>
    <span class="task w51 framed"><svg viewBox="0 0 32 32"><path d="M3 6h26v22H3z" fill="#f0d77d" stroke="#c6a74d"/><path d="M3 6h26v5H3z" fill="#fbf2c3"/><rect x="7" y="4" width="3" height="4" fill="#6ca34a"/><rect x="21" y="4" width="3" height="4" fill="#d35a3a"/><path d="M6 17h20l2 11H4z" fill="#6fb3dc"/></svg></span>
    <span class="task w59 framed apart"><svg viewBox="0 0 32 32"><rect x="3" y="2" width="26" height="28" fill="#0e8a6f"/><path d="M7 27 14 6h3l7 21M10 20h11" fill="none" stroke="#eafaf4" stroke-width="2.500"/><path d="M21 2v28M21 18h8" stroke="#8fdcc4" stroke-width="1.500"/><rect x="17" y="15" width="7" height="7" fill="#0e8a6f" stroke="#fff" stroke-width="1.500"/></svg></span>
    <span class="task w59 framed active"><svg viewBox="0 0 32 32"><rect x="5" y="8" width="19" height="17" rx="3" fill="#9aa2aa" stroke="#5c646c"/><circle cx="12" cy="17" r="6" fill="#3a4048"/><circle cx="12" cy="17" r="2.500" fill="#8eb2d0"/><rect x="18" y="3" width="8" height="9" fill="#757d85"/><rect x="9" y="25" width="12" height="4" fill="#3a4048"/></svg></span>
    <div class="tray">
      <svg class="kbd" viewBox="0 0 16 10"><rect x=".5" y=".5" width="15" height="9" fill="#94abc0" stroke="#d4dee7"/><path d="M2 3h12M2 5h12M4 7.500h8" stroke="#e3ebf2" stroke-dasharray="1 .8"/></svg>
      <svg class="cloud" viewBox="0 0 22 16"><path d="M4 15a4 4 0 0 1 0-8 6 6 0 0 1 11-1 4.500 4.500 0 0 1 2 9z" fill="#f6f8fa"/><circle cx="16" cy="4" r="3.500" fill="#f6f8fa"/></svg>
      <span class="temp">25℃</span>
      <svg class="trayicon" viewBox="0 0 16 16"><rect width="16" height="16" fill="#8c1c1c"/><path d="M3 13c3-2 5-6 6-10 0 4 2 7 5 8-3 0-7 1-11 2z" fill="none" stroke="#f4e3d8" stroke-width="1.200"/></svg>
      <svg class="trayicon" viewBox="0 0 16 16"><path d="M8 1l6 2v5c0 4-3 6-6 7-3-1-6-3-6-7V3z" fill="#3f8fdc" stroke="#e6f1fb"/><path d="M5 8l2.500 2.500L11 6" fill="none" stroke="#fff" stroke-width="1.500"/></svg>
      <svg class="trayicon" viewBox="0 0 16 16"><rect width="16" height="16" rx="2" fill="#1e7fd6"/><path d="M4 6c3-3 8-1 8 2 0 4-5 6-8 3" fill="none" stroke="#fff" stroke-width="2"/></svg>
    </div>
  </div>

  <div class="balloon">
    <div class="balloonhead">
      <svg class="infoicon" viewBox="0 0 16 16"><circle cx="8" cy="8" r="7" fill="#3557b8" stroke="#9db2e6" stroke-width=".6"/><rect x="7" y="3" width="2" height="2" fill="#fff"/><rect x="7" y="6.500" width="2" height="6" fill="#fff"/></svg>
      <strong class="balloontitle">通讯中心</strong>
      <span class="balloonclose"><svg viewBox="0 0 10 10"><path d="M2 2 8 8M8 2 2 8" stroke="#111" stroke-width="2"/></svg></span>
    </div>
    <p class="balloonbody">使软件保持最新的简单方法。</p>
  </div>

  <div class="watermark">
    <p class="wm-top">室内深化设计集训</p>
    <p class="wm-bottom">V：Lq86502114</p>
  </div>

  <svg class="cursor" viewBox="0 0 14 20"><path d="M1 1v15l4-3 3 6 3-1-3-6h5z" fill="#fff" stroke="#111"/></svg>
</div>
</body>
</html>
```
FILE: styles.css
```css
* { box-sizing: border-box; }
html, body { margin: 0; padding: 0; }
body { width: 1600px; height: 900px; overflow: hidden; background: #f2f1ef; font-family: "Liberation Sans", "Noto Sans CJK SC", sans-serif; color: #111; }
p { margin: 0; }
svg { display: block; }

.app { position: relative; width: 1600px; height: 900px; display: flex; flex-direction: column; overflow: hidden; }
.mono { font-family: "Liberation Mono", "Noto Sans CJK SC", monospace; font-size: 11px; letter-spacing: -.6px; }

.titlebar { height: 22px; flex: none; display: flex; align-items: center; padding: 0 0 3px 2px; border-top: 1px solid #2e4a66; background: linear-gradient(#bcd0e3, #c9dbec 70%, #bcd2e6); }
.applogo { width: 17px; height: 17px; flex: none; }
.titletext { margin-left: 7px; font-size: 12.500px; color: #14181d; white-space: nowrap; }
.winbtns { margin-left: auto; display: flex; gap: 5px; padding-right: 3px; }
.winbtn { width: 28px; height: 16px; border: 1px solid #7f9ab3; border-radius: 2px; background: linear-gradient(#dbe7f1, #a9c1d6); display: flex; align-items: center; justify-content: center; }
.winbtn svg { width: 14px; height: 12px; }
.winbtn.close { background: linear-gradient(#e88f7d, #c3402b); border-color: #a14c3d; }

.menubar { height: 20px; flex: none; display: flex; align-items: center; padding: 0 0 2px 8px; background: linear-gradient(#fcfdfe, #e6edf4); border-bottom: 1px solid #cfd6dd; }
.menulogo { width: 17px; height: 17px; flex: none; margin-right: 4px; }
.menuitem { font-size: 12px; margin-right: 14.400px; white-space: nowrap; color: #1a1a1a; }
.docbtns { margin-left: auto; display: flex; gap: 3px; padding-right: 2px; }
.docbtn { width: 16px; height: 16px; background: #eef2f6; border: 1px solid #c2ccd5; }
.docbtn svg { width: 14px; height: 14px; }

.toolrow { flex: none; display: flex; align-items: center; padding-left: 7px; background: #f4f3f1; }
.toolrow.first { height: 29px; }
.toolrow.second { height: 27px; padding-top: 2px; border-bottom: 2px solid #6f6f6f; }
.grip { width: 4px; height: 22px; margin-right: 2.500px; border-left: 1px solid #b8b8b8; border-right: 1px solid #b8b8b8; flex: none; }
.ic { width: 23px; height: 23px; flex: none; display: flex; align-items: center; justify-content: center; }
.ic svg { width: 18px; height: 18px; }
.arrowslot { width: 14px; height: 23px; flex: none; display: flex; align-items: center; justify-content: flex-start; }
.arrowslot svg { width: 8px; height: 8px; }
.sep { width: 1px; height: 22px; margin: 0 2px; background: #bdbdbd; flex: none; }
.endsep { width: 1px; height: 24px; margin: 0 9px 0 10px; background: #bdbdbd; flex: none; }
.gapsep { width: 3px; height: 22px; margin: 0 7px 0 9px; border-left: 1px solid #bdbdbd; border-right: 1px solid #bdbdbd; flex: none; }
.gapsep.small { margin: 0 8px 0 9px; }

.combo { height: 22px; flex: none; display: flex; align-items: center; padding: 0 6px; background: #fff; border: 1px solid #e4e4e4; border-bottom-color: #b6b6b6; position: relative; }
.caret { margin-left: auto; width: 0; height: 0; border-left: 4px solid transparent; border-right: 4px solid transparent; border-top: 5px solid #222; flex: none; }
.disabledarrow .caret, .disabled .caret { border-top-color: #aeaeae; }
.w98 { width: 98px; margin-right: 7px; }
.w102 { width: 102px; margin-right: 4px; }
.w105 { width: 105px; }
.w118 { width: 118px; margin-left: 6px; background: #ededed; }
.w126 { width: 126px; margin-left: 8px; }
.w150 { width: 150px; }
.w157 { width: 157px; margin-left: 6px; }
.w172 { width: 172px; }
.w300 { width: 300px; padding-left: 4px; }
.swatch { width: 10px; height: 10px; border: 1px solid #222; background: #fff; flex: none; }
.bylayer { margin-left: 3px; }
.linesample { width: 32px; height: 1px; background: #111; flex: none; margin-right: 4px; }
.linesample.long { width: 57px; }
.spaced { padding-left: 4px; }
.lic { width: 17px; height: 16px; flex: none; display: flex; justify-content: center; }
.lic svg { height: 16px; width: 15px; }
.layerzero { margin-left: 7px; }
.greytext { font-size: 12px; color: #8b8b8b; margin-left: 2px; }

.workspace { height: 639px; flex: none; display: flex; }
.sidetb { width: 27px; flex: none; display: flex; flex-direction: column; align-items: center; padding-top: 12px; }
.sidetb.left { padding-right: 3px; }
.sidetb.right { width: 28px; align-items: center; padding-left: 2px; }
.ti { width: 20px; height: 21.900px; flex: none; display: flex; align-items: center; justify-content: center; }
.ti svg { width: 18px; height: 18px; }
.letter { font-size: 18px; color: #111; line-height: 1; }
.griph { width: 24px; height: 4px; border-top: 1px solid #b8b8b8; border-bottom: 1px solid #b8b8b8; margin: 4px 0 9px; flex: none; }

.canvas { flex: 1; min-width: 0; background: #000; overflow: hidden; }
.drawing { width: 1545px; height: 639px; }
.cad-title { font-family: "Noto Sans CJK SC", sans-serif; font-size: 20.500px; fill: #6f6f6f; text-anchor: middle; }
.cad-sub { font-family: "Noto Sans CJK SC", sans-serif; font-size: 14.500px; fill: #6f6f6f; text-anchor: middle; }
.cad-band { font-family: "Noto Sans CJK SC", sans-serif; font-weight: 700; font-size: 12px; fill: #9a9a9a; text-anchor: middle; }
.cad-zs { font-family: "Liberation Serif", serif; font-style: italic; font-size: 15px; fill: #8e8e8e; text-anchor: middle; }
.helpq { font-family: "Liberation Sans", sans-serif; font-weight: 700; font-size: 12px; fill: #fff; text-anchor: middle; }
.glyph-a { font-family: "Liberation Sans", sans-serif; font-size: 14px; fill: #222; }

.tabsrow { height: 15px; flex: none; display: flex; align-items: center; padding-left: 27px; }
.navbtn { width: 18.500px; height: 15px; flex: none; display: flex; align-items: center; justify-content: center; border-right: 1px solid #d0d0d0; }
.navbtn svg { width: 11px; height: 11px; }
.tab { width: 32px; font-size: 12.500px; line-height: 15px; height: 15px; margin-left: 6px; text-align: center; border-left: 1px solid #222; border-right: 1px solid #222; transform: skewX(12deg); }
.tab.active { width: 57px; background: #000; color: #fff; margin-left: 4px; white-space: nowrap; }

.command { height: 81px; margin-top: 5px; flex: none; display: flex; border-top: 2px solid #7a7a7a; padding-top: 9px; }
.cmdgrip { width: 17px; flex: none; position: relative; border-right: 1px solid #bbb; margin-right: 0; }
.cmdbox { flex: 1; min-width: 0; height: 68px; background: #fff; border-top: 1px solid #6f6f6f; border-left: 1px solid #8a8a8a; border-bottom: 1px solid #6f6f6f; }
.cmdoutput { height: 47px; padding: 0 0 0 1px; border-bottom: 1px solid #9c9c9c; }
.cmdline { height: 16px; font-family: "Liberation Mono", monospace; font-size: 13.330px; line-height: 16px; white-space: pre; color: #111; }
.cjk { display: inline-block; height: 16px; overflow: visible; font-family: "Noto Sans CJK SC", sans-serif; font-size: 14.500px; letter-spacing: 1.500px; line-height: 16px; vertical-align: baseline; }
.cmdinput { margin: 1px 0 0 1px; }
.cmdscroll { width: 23px; flex: none; height: 68px; background: #eef0f2; display: flex; flex-direction: column; align-items: flex-end; padding: 7px 2px 0 0; }
.cmdscroll svg { width: 10px; height: 8px; margin: 0 8px 0 0; }
.cmdthumb { width: 6px; height: 28px; background: linear-gradient(#7c8084, #a25a5e); margin-top: 0; }

.status { height: 22px; flex: none; display: flex; align-items: flex-end; gap: 6px; padding-left: 3px; background: #f0f0f0; border-top: 1px solid #bbb; }
.coords { width: 199px; height: 19px; flex: none; margin-right: -1px; padding-left: 3px; font-family: "Liberation Mono", monospace; font-size: 11px; letter-spacing: -.6px; line-height: 17px; white-space: pre; background: #ececec; border: 1px solid #bdbdbd; }
.sbtn { width: 26px; height: 20px; flex: none; font-size: 12.500px; line-height: 20px; text-align: center; white-space: nowrap; overflow: hidden; }
.sbtn.wide { width: 50px; }
.sbtn.narrow { width: 22px; }
.sbtn.mono { font-size: 10px; letter-spacing: -.3px; }
.sbtn.on { border-top: 1px solid #333; border-left: 1px solid #777; border-right: 1px solid #ccc; background: #fafafa; line-height: 19px; }
.sarrow { width: 8px; height: 18px; background: #e4e4e4; border: 1px solid #ccc; flex: none; }
.sarrow.first { margin-left: 19px; }
.sicon { width: 18px; height: 20px; flex: none; margin: 0 1px; }

.taskbar { height: 40px; flex: none; display: flex; align-items: stretch; gap: 3px; background: linear-gradient(#6f8da8, #7f9bb5 40%, #7a97b2); border-top: 1px solid #4f6a84; }
.orb { width: 56px; flex: none; display: flex; align-items: center; justify-content: center; }
.orb svg { width: 38px; height: 38px; }
.task { flex: none; display: flex; align-items: center; justify-content: center; border-radius: 3px; }
.task svg { width: 32px; height: 32px; }
.task.w51 { width: 51px; }
.task.w58 { width: 58px; }
.task.w59 { width: 59px; }
.task.w60 { width: 60px; }
.task.framed { background: linear-gradient(rgba(255,255,255,.22), rgba(255,255,255,.06)); border: 1px solid #42586d; box-shadow: inset 0 0 0 1px rgba(255,255,255,.25); }
.task.apart { margin-left: 8px; }
.task.active { background: linear-gradient(rgba(255,255,255,.4), rgba(255,255,255,.14)); }
.tray { margin-left: auto; width: 410px; flex: none; display: flex; align-items: center; padding-left: 5px; }
.kbd { width: 16px; height: 10px; }
.cloud { width: 22px; height: 16px; margin-left: 16px; }
.temp { font-size: 12px; color: #d8e2ea; margin-left: 8px; }
.trayicon { width: 16px; height: 16px; margin-left: 8px; }
.temp + .trayicon { margin-left: 12px; }

.balloon { position: absolute; left: 1363px; top: 756px; width: 184px; height: 60px; background: #fffde6; border: 1px solid #222; border-radius: 18px 18px 0 0; padding: 7px 7px 0 9px; }
.balloonhead { display: flex; align-items: center; height: 16px; }
.infoicon { width: 16px; height: 16px; }
.balloontitle { font-size: 12px; margin-left: 9px; font-family: "Noto Sans CJK SC", sans-serif; }
.balloonclose { margin-left: auto; width: 16px; height: 15px; background: #f3f3f3; border: 1px solid #8a8a8a; }
.balloonclose svg { width: 14px; height: 13px; }
.balloonbody { font-size: 12px; line-height: 16px; margin: 5px 0 0 6px; white-space: nowrap; font-family: "Noto Sans CJK SC", sans-serif; }

.watermark { position: absolute; left: 1356px; top: 808px; width: 244px; height: 88px; background: #fff; overflow: hidden; white-space: nowrap; color: #2a2a2a; font-family: "Noto Sans CJK SC", sans-serif; }
.wm-top { font-size: 27px; line-height: 40px; padding: 1px 0 0 10px; letter-spacing: .7px; font-weight: 300; }
.wm-bottom { font-size: 27.300px; line-height: 44px; padding-left: 25px; color: #14141c; font-weight: 400; }
.cursor { position: absolute; left: 585px; top: 880px; width: 14px; height: 20px; }
```
